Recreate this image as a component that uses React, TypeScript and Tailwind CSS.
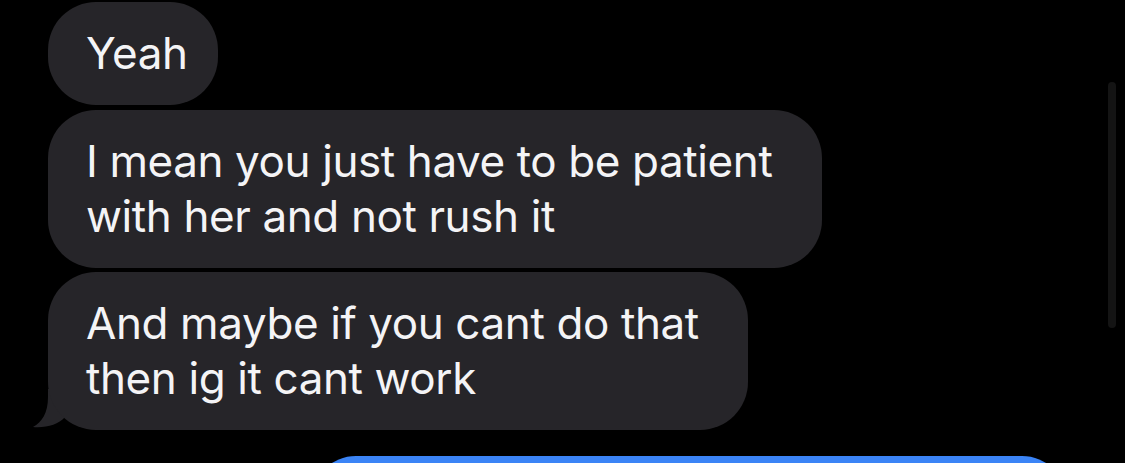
const FONT = "Inter, 'Noto Sans', sans-serif";

function Bubble({ lines, width, tail = false }: { lines: string[]; width: number; tail?: boolean }) {
  return (
    <div className="relative" style={{ width }}>
      <div className="relative z-10 bg-[#262529] rounded-[48px] pl-[38px] pr-[30px] py-[24px] text-[#f4f4f6] text-[44px] leading-[55px] tracking-[-0.4px] whitespace-nowrap">
        {lines.map((l) => (
          <div key={l}>{l}</div>
        ))}
      </div>
      {tail && (
        <svg className="absolute left-[-16px] bottom-0 z-0" width="80" height="41" viewBox="0 0 80 41">
          <path
            d="M16 0 H80 V40 H70 C55 40 42 36 33 28 C26 36 14 39 1 38 C10 33 16 24 16 8 Z"
            fill="#262529"
          />
        </svg>
      )}
    </div>
  );
}

export default function App() {
  return (
    <div className="relative w-[1125px] h-[463px] bg-black overflow-hidden" style={{ fontFamily: FONT }}>
      <div className="flex flex-col pl-[48px] pt-[2px]">
        <Bubble lines={["Yeah"]} width={170} />
        <div className="mt-[5px]">
          <Bubble lines={["I mean you just have to be patient", "with her and not rush it"]} width={774} />
        </div>
        <div className="mt-[4px]">
          <Bubble lines={["And maybe if you cant do that", "then ig it cant work"]} width={700} tail />
        </div>
        <div className="mt-[26px] ml-[263px] w-[756px] h-[120px] bg-[#3b84f6] rounded-[45px]" />
      </div>
      <div className="absolute left-[1108px] top-[82px] w-[8px] h-[246px] rounded-full bg-[#141414]" />
    </div>
  );
}
